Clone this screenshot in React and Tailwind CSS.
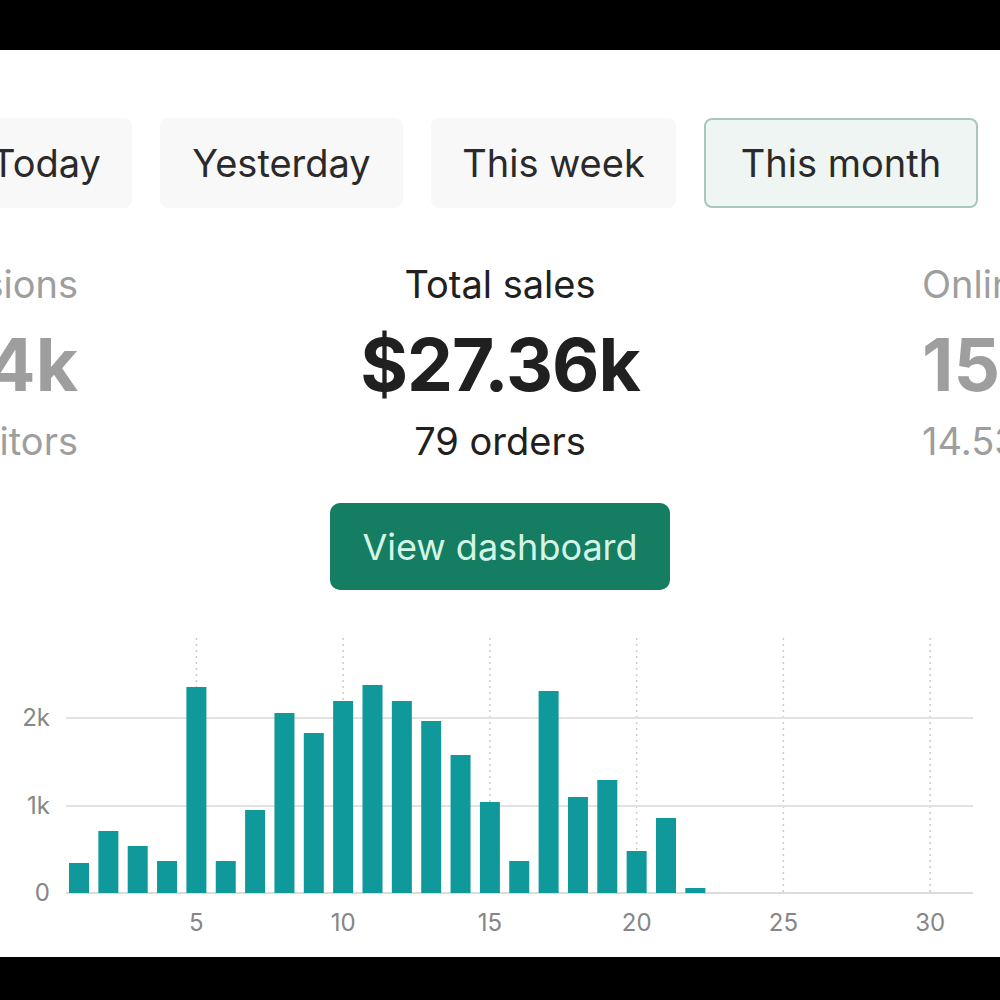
import React from "react";

const bars = [30, 62, 47, 32, 206, 32, 83, 180, 160, 192, 208, 192, 172, 138, 91, 32, 202, 96, 113, 42, 75, 5, 0, 0, 0, 0, 0, 0, 0, 0, 0];

function Chart() {
  const base = 273;
  const cx = (d) => 79 + 29.35 * (d - 1);
  return (
    <svg width="1000" height="337" viewBox="0 0 1000 337" className="block">
      {[5, 10, 15, 20, 25, 30].map((d) => (
        <line key={d} x1={cx(d)} x2={cx(d)} y1={18} y2={base} stroke="#cccccc" strokeWidth="1.5" strokeDasharray="2 4" />
      ))}
      <line x1="66" x2="973" y1="98" y2="98" stroke="#e2e2e2" strokeWidth="2" />
      <line x1="66" x2="973" y1="186" y2="186" stroke="#e2e2e2" strokeWidth="2" />
      <line x1="66" x2="973" y1={base} y2={base} stroke="#dcdcdc" strokeWidth="2" />
      {bars.map((h, i) =>
        h > 0 ? (
          <rect key={i} x={cx(i + 1) - 10} y={base - h} width="20" height={h} fill="#10999a" />
        ) : null
      )}
      <g fill="#868686" fontFamily="Inter, 'Liberation Sans', sans-serif" fontSize="24">
        <text x="50" y="106" textAnchor="end">2k</text>
        <text x="50" y="194" textAnchor="end">1k</text>
        <text x="50" y="281" textAnchor="end">0</text>
        {[5, 10, 15, 20, 25, 30].map((d) => (
          <text key={d} x={cx(d)} y="311" textAnchor="middle">{d}</text>
        ))}
      </g>
    </svg>
  );
}

export default function App() {
  const tab = "flex h-[90px] shrink-0 items-center justify-center rounded-lg text-[38px] text-[#2a2a2a]";
  return (
    <div className="w-[1000px] h-[1000px] overflow-hidden bg-white" style={{ fontFamily: "Inter, 'Liberation Sans', sans-serif" }}>
      <div className="h-[50px] bg-black" />
      <div className="flex gap-7 ml-[-40px] mt-[68px]">
        <div className={`${tab} w-[172px] bg-[#f8f8f8]`}>Today</div>
        <div className={`${tab} w-[243px] bg-[#f8f8f8]`}>Yesterday</div>
        <div className={`${tab} w-[245px] bg-[#f8f8f8]`}>This week</div>
        <div className={`${tab} w-[274px] bg-[#eef5f2] border-2 border-[#aac7bd]`}>This month</div>
        <div className={`${tab} w-[200px] bg-[#f8f8f8]`}>Custom</div>
      </div>
      <div className="flex overflow-hidden mt-[54px]">
        <div className="w-[300px] shrink-0 ml-[-222px] text-right text-[#9e9e9e]">
          <div className="text-[38px] leading-[44px]">Sessions</div>
          <div className="text-[73px] leading-[80px] font-bold mt-[19px]">18.4k</div>
          <div className="text-[38px] leading-[44px] mt-[14px]">visitors</div>
        </div>
        <div className="w-[844px] shrink-0 flex flex-col items-center text-[#202020]">
          <div className="text-[38px] leading-[44px]">Total sales</div>
          <div className="text-[73px] leading-[80px] font-bold mt-[19px] tracking-[-1px]">$27.36k</div>
          <div className="text-[38px] leading-[44px] mt-[14px]">79 orders</div>
          <button className="mt-[40px] w-[340px] h-[87px] rounded-[10px] bg-[#147d62] text-[#d4f5e6] text-[36px]">
            View dashboard
          </button>
        </div>
        <div className="w-[300px] shrink-0 text-left text-[#9e9e9e]">
          <div className="text-[38px] leading-[44px] whitespace-nowrap">Online store</div>
          <div className="text-[73px] leading-[80px] font-bold mt-[19px]">15.2k</div>
          <div className="text-[38px] leading-[44px] mt-[14px] whitespace-nowrap">14.53%</div>
        </div>
      </div>
      <div className="mt-[30px]">
        <Chart />
      </div>
      <div className="h-[60px] bg-black" />
    </div>
  );
}
